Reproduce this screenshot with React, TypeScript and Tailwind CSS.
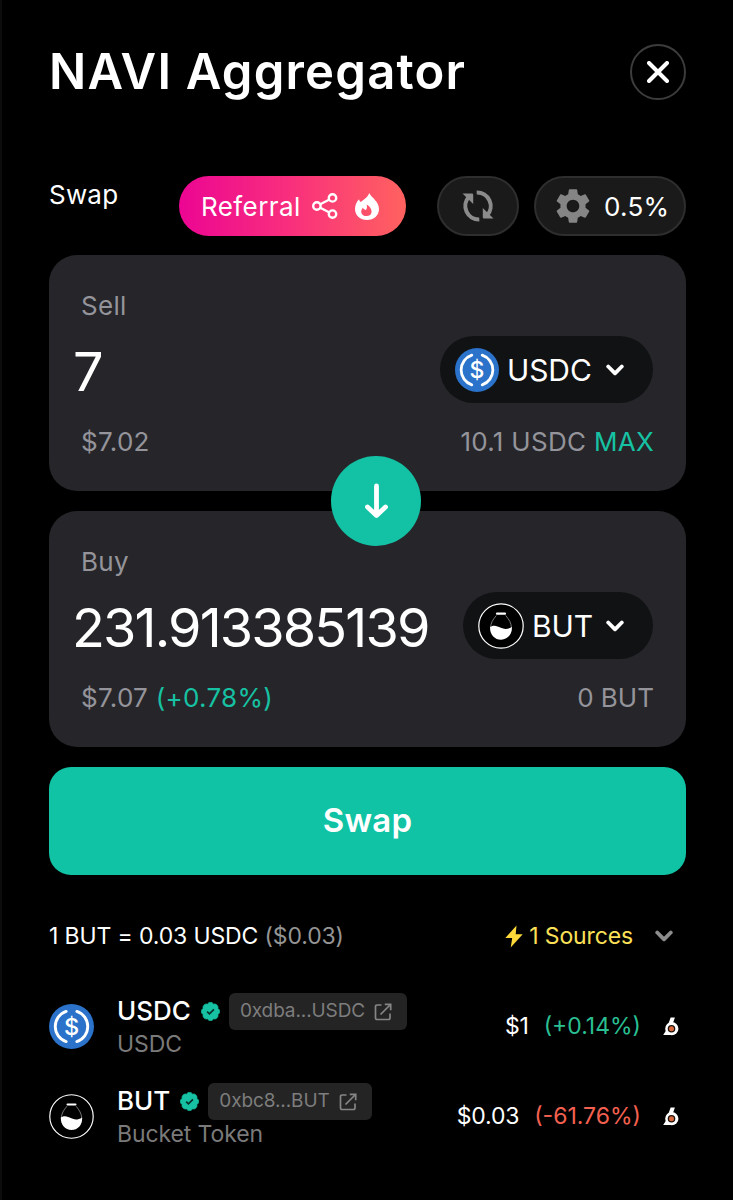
import type { ReactNode } from 'react';
import { MdSettings } from 'react-icons/md';

type TokenRow = {
  symbol: string;
  name: string;
  address: string;
  price: string;
  change: string;
  positive: boolean;
  icon: ReactNode;
};

function UsdcIcon({ className }: { className: string }) {
  return (
    <svg viewBox="0 0 44 44" className={className}>
      <circle cx="22" cy="22" r="22" fill="#2a72ca" />
      <g fill="none" stroke="#fff" strokeWidth="2.8" strokeLinecap="round">
        <path d="M16.800 7.200A15.600 15.600 0 0 0 16.800 36.800" />
        <path d="M27.200 7.200A15.600 15.600 0 0 1 27.200 36.800" />
      </g>
      <text x="22" y="30.200" textAnchor="middle" fontSize="23" fontWeight="500" fontFamily="Inter, sans-serif" fill="#fff">
        $
      </text>
    </svg>
  );
}

function BucketIcon({ className }: { className: string }) {
  return (
    <svg viewBox="0 0 46 46" className={className}>
      <circle cx="23" cy="23" r="22.2" fill="#000" stroke="#fff" strokeWidth="1.2" />
      <path d="M18.300 12.500C15 16.500 12.600 20 12.600 25a10.400 10.400 0 0 0 20.800 0c0-5-2.400-8.500-5.700-12.500" fill="none" stroke="#aaa" strokeWidth="0.7" />
      <path d="M19 10.700H27" stroke="#fff" strokeWidth="2.200" strokeLinecap="round" />
      <path d="M12.100 24c4-2.500 7-1 10.700.8 3.500 1.700 7 1.600 11.100-.9.300 8-4.600 12.800-10.900 12.800S11.800 31.500 12.100 24Z" fill="#fff" />
    </svg>
  );
}

function ShareIcon() {
  return (
    <svg viewBox="0 0 26 26" className="h-[26px] w-[26px]" fill="none" stroke="#fff" strokeWidth="2.4">
      <circle cx="20.500" cy="4.900" r="3.700" />
      <circle cx="4.900" cy="13" r="3.700" />
      <circle cx="20.500" cy="21.100" r="3.700" />
      <path d="M8.200 11.200l8.800-4.500M8.200 14.800l8.800 4.500" />
    </svg>
  );
}

function FlameIcon() {
  return (
    <svg viewBox="0 0 24 27" className="h-[27px] w-6">
      <path
        fillRule="evenodd"
        fill="#fff"
        d="M14.200 0C16.500 4.600 24 8.500 24 16c0 6.500-5.200 11-12 11S0 22.500 0 16C0 11.500 2 8.500 4 6.200c.4 1.400.9 2.200 1.900 2.800C8.500 6.500 12.800 4.500 14.200 0ZM11.700 11.500c.6 3 .1 4.400-.9 5.600-.8-.4-2.300-1-2.900-2.400C6.500 16.500 6 18 6.300 19.500c.5 2.500 2.700 3.600 5.200 3.600 3 0 5.100-1.700 5.100-4.300 0-3.200-2.300-5.900-4.900-7.300Z"
      />
    </svg>
  );
}

function RefreshIcon() {
  return (
    <svg viewBox="0 0 34 34" className="h-[34px] w-[34px]">
      <g fill="none" stroke="#8b8b8b" strokeWidth="4">
        <path d="M18.300 30.500A13.600 13.600 0 0 1 7.800 7.800" />
        <path d="M15.700 3.500A13.600 13.600 0 0 1 26.200 26.200" />
      </g>
      <path d="M1.500 4.500h9.500q1.200 0 1.200 1.200V15ZM32.500 29.500h-9.500q-1.200 0-1.200-1.200V19Z" fill="#8b8b8b" />
    </svg>
  );
}

function Chevron({ className }: { className: string }) {
  return (
    <svg viewBox="0 0 18 12" className={className} fill="none" stroke="currentColor" strokeWidth="3.800" strokeLinecap="round" strokeLinejoin="round">
      <path d="M2.200 2.500L9 9.300l6.800-6.800" />
    </svg>
  );
}

function VerifiedIcon() {
  return (
    <svg viewBox="1.500 1.500 21 21" className="h-[19px] w-[19px]">
      <path
        d="M3.850 8.620a4 4 0 0 1 4.780-4.770 4 4 0 0 1 6.740 0 4 4 0 0 1 4.780 4.780 4 4 0 0 1 0 6.740 4 4 0 0 1-4.770 4.780 4 4 0 0 1-6.750 0 4 4 0 0 1-4.780-4.770 4 4 0 0 1 0-6.760Z"
        fill="#16c2a3"
        stroke="#16c2a3"
        strokeWidth="1"
      />
      <path d="M8.300 12.200l2.500 2.400 5-5" fill="none" stroke="#06302a" strokeWidth="1.900" />
    </svg>
  );
}

function ExternalIcon() {
  return (
    <svg viewBox="0 0 18 18" className="h-[18px] w-[18px]" fill="none" stroke="#858585" strokeWidth="1.700">
      <path d="M7.500 2H3.200Q1.500 2 1.500 3.700v11.100q0 1.700 1.700 1.700h11.100q1.700 0 1.700-1.700V10.500" />
      <path d="M10.800 1.300h5.900v5.900M16.500 1.500L6.500 11.500" />
    </svg>
  );
}

// Small logo of the exchange that quotes the price
function SourceIcon() {
  return (
    <svg viewBox="0 0 16 19" className="h-[19px] w-4">
      <path d="M7.600.6h4.300L9.800 6.500 8 18H.2Q4 13.500 5 8Z" fill="#fff" />
      <circle cx="8.800" cy="11.700" r="6.600" fill="#fff" />
      <circle cx="8.500" cy="11.700" r="3.800" fill="#1d1410" />
      <circle cx="8.500" cy="11.700" r="2.500" fill="#d9683c" />
    </svg>
  );
}

function TokenButton({ symbol, width, children }: { symbol: string; width: string; children: ReactNode }) {
  return (
    <button className={`flex h-[67px] items-center rounded-full bg-[#111214] text-[30px] tracking-[-0.1px] text-white ${width}`}>
      {children}
      <span className="mt-px ml-2">{symbol}</span>
      <Chevron className="mr-[29px] ml-auto h-3 w-[18px]" />
    </button>
  );
}

const tokens: TokenRow[] = [
  {
    symbol: 'USDC',
    name: 'USDC',
    address: '0xdba...USDC',
    price: '$1',
    change: '(+0.14%)',
    positive: true,
    icon: <UsdcIcon className="h-[45px] w-[45px]" />,
  },
  {
    symbol: 'BUT',
    name: 'Bucket Token',
    address: '0xbc8...BUT',
    price: '$0.03',
    change: '(-61.76%)',
    positive: false,
    icon: <BucketIcon className="h-[45px] w-[45px]" />,
  },
];

export default function App() {
  return (
    <div className="min-h-screen w-[733px] border-l-2 border-[#0c0c0c] bg-black pt-11 pr-[47px] pl-[47px] font-['Inter',sans-serif] text-white">
      {/* Header */}
      <div className="flex h-14 items-center justify-between">
        <h1 className="-mt-0.5 text-[49px] leading-none font-semibold tracking-[1.2px] whitespace-nowrap">NAVI Aggregator</h1>
        <button className="flex h-14 w-14 items-center justify-center rounded-full border-2 border-[#3c3c3c]">
          <svg viewBox="0 0 22 22" className="h-[22px] w-[22px]" stroke="#fff" strokeWidth="4" strokeLinecap="round">
            <path d="M2 2l18 18M20 2L2 20" />
          </svg>
        </button>
      </div>

      {/* Toolbar */}
      <div className="mt-[76px] flex h-[60px]">
        <span className="mt-px text-[26px] leading-9 tracking-[0.2px]">Swap</span>
        <button className="ml-auto flex h-[60px] w-[227px] items-center rounded-full bg-linear-to-r/srgb from-[#ec0593] via-[#f9307c] to-[#ff625f] pl-[22px] text-[26px] tracking-[0.4px]">
          <span>Referral</span>
          <span className="ml-auto flex w-[94px] items-center gap-[17px]">
            <ShareIcon />
            <FlameIcon />
          </span>
        </button>
        <button className="ml-[31px] flex h-[60px] w-[82px] items-center justify-center rounded-full border-2 border-[#2e2e2e] bg-[#1a1a1a]">
          <RefreshIcon />
        </button>
        <button className="ml-[15px] flex h-[60px] w-[152px] items-center rounded-full border-2 border-[#2e2e2e] bg-[#1a1a1a] pl-4 text-[26px]">
          <MdSettings size={42} className="shrink-0 text-[#858585]" />
          <span className="ml-[10px] tracking-[0.3px]">0.5%</span>
        </button>
      </div>

      {/* Sell and buy panels */}
      <div className="relative mt-[19px] flex flex-col gap-5">
        <div className="h-[236px] rounded-[28px] bg-[#26262a] pt-8 pr-8 pl-8 text-[26px] tracking-[0.3px] text-[#94949a]">
          <p className="h-[38px] leading-[38px]">Sell</p>
          <div className="mt-[11px] mr-px flex h-[67px] items-center justify-between">
            <span className="-ml-2 pt-1 text-[54px] leading-none text-white">7</span>
            <TokenButton symbol="USDC" width="w-[213px] pl-[15px]">
              <UsdcIcon className="h-11 w-11" />
            </TokenButton>
          </div>
          <div className="mt-[19px] flex justify-between leading-[39px]">
            <span>$7.02</span>
            <span>
              10.1 USDC <span className="text-[#16c2a3]">MAX</span>
            </span>
          </div>
        </div>
        <div className="h-[236px] rounded-[28px] bg-[#26262a] pt-8 pr-8 pl-8 text-[26px] tracking-[0.3px] text-[#94949a]">
          <p className="h-[38px] leading-[38px]">Buy</p>
          <div className="mt-[11px] mr-px flex h-[67px] items-center justify-between">
            <span className="-ml-[9px] pt-1 text-[54px] leading-none tracking-[-1.85px] text-white">231.913385139</span>
            <TokenButton symbol="BUT" width="w-[190px] pl-[15px]">
              <BucketIcon className="h-[46px] w-[46px]" />
            </TokenButton>
          </div>
          <div className="mt-[19px] flex justify-between leading-[39px]">
            <span>
              $7.07 <span className="text-[#16c2a3]">(+0.78%)</span>
            </span>
            <span className="tracking-normal">0 BUT</span>
          </div>
        </div>
        <button className="absolute top-[201px] left-[282px] flex h-[90px] w-[90px] items-center justify-center rounded-full bg-[#13c2a4]">
          <svg viewBox="0 0 24 36" className="h-9 w-6" fill="none" stroke="#fff" strokeWidth="4.800" strokeLinecap="round" strokeLinejoin="round">
            <path d="M12.500 3v29M3.500 24l9 8.500 9-8.500" />
          </svg>
        </button>
      </div>

      <button className="mt-5 h-[108px] w-full rounded-[22px] bg-[#11c3a5] text-[33px] font-semibold tracking-[0.2px]">Swap</button>

      {/* Rate */}
      <div className="mt-[41px] flex h-10 items-center text-[23px] tracking-[-0.13px] whitespace-nowrap">
        <span>
          1 BUT = 0.03 USDC <span className="text-[#949494]">($0.03)</span>
        </span>
        <svg viewBox="0 0 18 23" className="ml-auto h-[23px] w-[18px]">
          <path d="M11.500.5L.3 13h6.900l-1.500 9.500L17.700 9.300h-7Z" fill="#ffd83a" />
        </svg>
        <span className="ml-[6px] text-[#fce057]">1 Sources</span>
        <Chevron className="mr-[13px] ml-[22px] h-3 w-[18px] text-[#8d8d8d]" />
      </div>

      {/* Token details */}
      <div className="mt-[25px]">
        {tokens.map((token) => (
          <div key={token.symbol} className="flex h-[90px] items-center">
            <div className="w-[68px]">{token.icon}</div>
            <div>
              <div className="flex h-[37px] items-center">
                <span className="mr-[10px] pb-0.5 text-[26px] font-medium">{token.symbol}</span>
                <VerifiedIcon />
                <span className="ml-[9px] flex h-[37px] items-center gap-[9px] rounded-md bg-[#242424] pr-[15px] pl-[11px] text-[19px] tracking-[-0.1px] text-[#7d7d7d]">
                  {token.address}
                  <ExternalIcon />
                </span>
              </div>
              <p className="h-[29px] text-[23px] leading-[29px] tracking-[-0.1px] text-[#7a7a7a]">{token.name}</p>
            </div>
            <div className="mr-[7px] ml-auto flex items-center text-[23px]">
              <span className="tracking-[-0.2px]">{token.price}</span>
              <span className={`mr-[22px] ml-[15px] ${token.positive ? 'text-[#2abf92]' : 'text-[#f4604f]'}`}>{token.change}</span>
              <SourceIcon />
            </div>
          </div>
        ))}
      </div>
    </div>
  );
}
